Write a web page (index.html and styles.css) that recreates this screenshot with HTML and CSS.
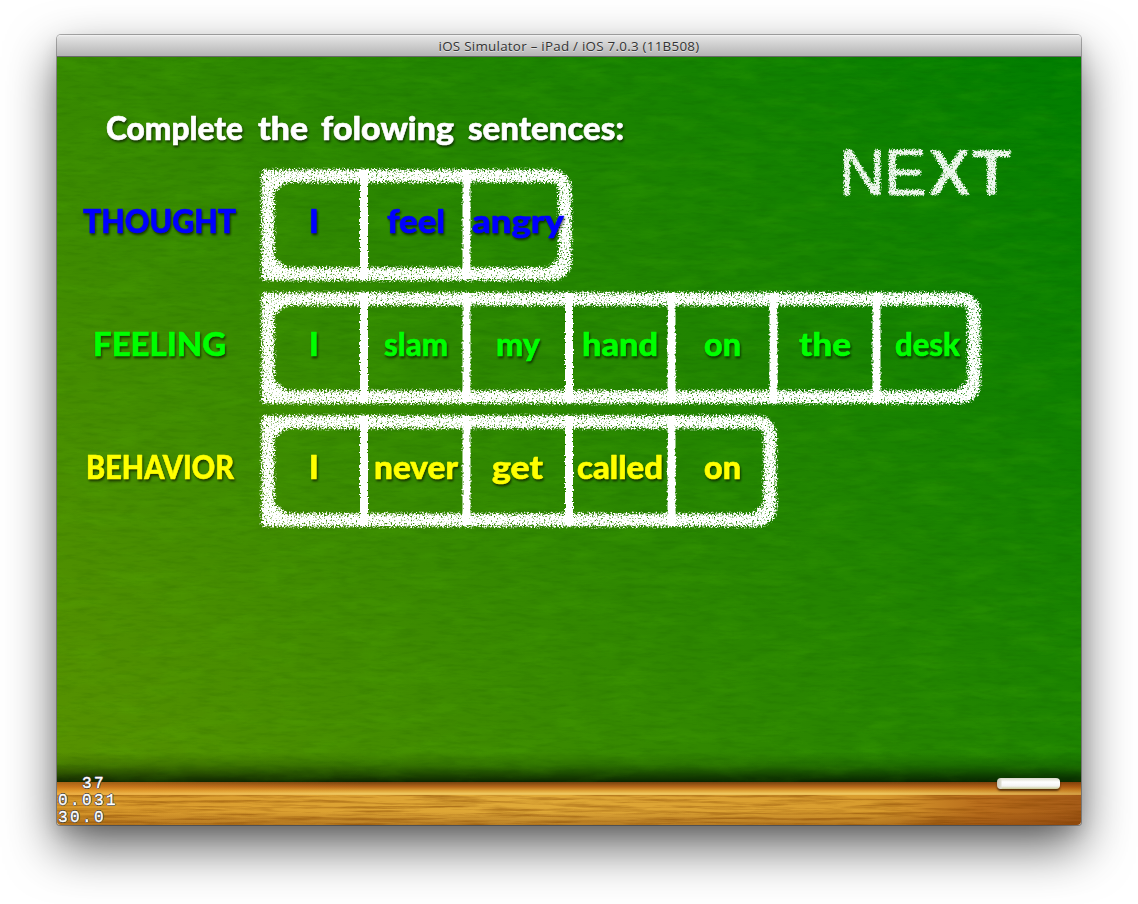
FILE: index.html
```html
<!DOCTYPE html>
<html lang="en">
<head>
<meta charset="utf-8">
<title>iOS Simulator</title>
<link rel="stylesheet" href="styles.css">
</head>
<body>
<svg class="defs" width="0" height="0" aria-hidden="true">
  <defs>
    <filter id="chalk" filterUnits="userSpaceOnUse" x="-10" y="-10" width="760" height="140" color-interpolation-filters="sRGB">
      <feGaussianBlur in="SourceAlpha" stdDeviation="2.2" result="b"/>
      <feTurbulence type="fractalNoise" baseFrequency="0.6" numOctaves="2" seed="4" result="n"/>
      <feComposite in="b" in2="n" operator="arithmetic" k2="0.9" k3="2.1" k4="-1.05" result="m"/>
      <feComponentTransfer in="m" result="t"><feFuncA type="linear" slope="2.2" intercept="-0.62"/></feComponentTransfer>
      <feComponentTransfer in="b" result="near"><feFuncA type="linear" slope="5" intercept="-0.5"/></feComponentTransfer>
      <feFlood flood-color="#fff"/>
      <feComposite in2="t" operator="in"/>
      <feComposite in2="near" operator="in"/>
    </filter>
    <filter id="line" filterUnits="userSpaceOnUse" x="-10" y="-10" width="760" height="140" color-interpolation-filters="sRGB">
      <feTurbulence type="fractalNoise" baseFrequency="0.5" numOctaves="2" seed="9" result="n"/>
      <feDisplacementMap in="SourceGraphic" in2="n" scale="4" xChannelSelector="R" yChannelSelector="G"/>
    </filter>
    <filter id="chalk-thin" filterUnits="userSpaceOnUse" x="-8" y="-5" width="190" height="70" color-interpolation-filters="sRGB">
      <feGaussianBlur in="SourceAlpha" stdDeviation="1.2" result="b"/>
      <feTurbulence type="fractalNoise" baseFrequency="0.65" numOctaves="2" seed="7" result="n"/>
      <feComposite in="b" in2="n" operator="arithmetic" k2="1" k3="2" k4="-1.02" result="m"/>
      <feComponentTransfer in="m" result="t"><feFuncA type="linear" slope="1.8" intercept="-0.5"/></feComponentTransfer>
      <feComponentTransfer in="b" result="near"><feFuncA type="linear" slope="5" intercept="-0.5"/></feComponentTransfer>
      <feFlood flood-color="#fff" flood-opacity=".94"/>
      <feComposite in2="t" operator="in"/>
      <feComposite in2="near" operator="in"/>
    </filter>
    <filter id="smudge" x="0" y="0" width="100%" height="100%" color-interpolation-filters="sRGB">
      <feTurbulence type="fractalNoise" baseFrequency="0.02 0.07" numOctaves="6" seed="12"/>
      <feColorMatrix values="0 0 0 0 .4  0 0 0 0 .85  0 0 0 0 0  1.5 0 0 0 -.66"/>
    </filter>
    <filter id="shade" x="0" y="0" width="100%" height="100%" color-interpolation-filters="sRGB">
      <feTurbulence type="fractalNoise" baseFrequency="0.05 0.25" numOctaves="4" seed="31"/>
      <feColorMatrix values="0 0 0 0 0  0 0 0 0 .2  0 0 0 0 0  1.4 0 0 0 -.62"/>
    </filter>
    <filter id="grain" x="0" y="0" width="100%" height="100%" color-interpolation-filters="sRGB">
      <feTurbulence type="fractalNoise" baseFrequency="0.014 0.35" numOctaves="5" seed="5"/>
      <feColorMatrix values="0 0 0 0 .5  0 0 0 0 .25  0 0 0 0 0  2.4 0 0 0 -1"/>
    </filter>
  </defs>
</svg>

<main class="window">
  <header class="titlebar">iOS Simulator – iPad / iOS 7.0.3 (11B508)</header>
  <section class="board">
    <svg class="texture" width="1024" height="726" aria-hidden="true">
      <rect width="1024" height="726" filter="url(#smudge)" opacity=".17"/>
      <rect width="1024" height="726" filter="url(#shade)" opacity=".16"/>
    </svg>

    <div class="top">
      <svg class="hand title" width="518" height="40">
        <text y="26"><tspan x="0" textLength="137" lengthAdjust="spacingAndGlyphs">Complete</tspan> <tspan x="152" textLength="50" lengthAdjust="spacingAndGlyphs">the</tspan> <tspan x="215" textLength="133" lengthAdjust="spacingAndGlyphs">folowing</tspan> <tspan x="362" textLength="156" lengthAdjust="spacingAndGlyphs">sentences:</tspan></text>
      </svg>
      <svg class="next" width="175" height="56">
        <text x="-4 41 85 129" y="51" filter="url(#chalk-thin)">NE<tspan class="heavy">XT</tspan></text>
      </svg>
    </div>

    <div class="rows">
      <div class="row blue">
        <svg class="frame" width="311" height="112" aria-hidden="true">
          <g filter="url(#chalk)"><path class="edge" d="M7 7H290Q304 7 304 21V91Q304 105 290 105H7Z"/><path class="corner" d="M12 16L17 12M12 96L19 101M299 96L294 101"/></g>
          <path class="rule" filter="url(#line)" d="M103 1V111M205.5 1V111"/>
        </svg>
        <div class="label"><svg class="hand" width="153" height="40"><text y="30" textLength="153" lengthAdjust="spacingAndGlyphs">THOUGHT</text></svg></div>
        <div class="cell"><svg class="hand" width="9" height="40"><text y="30">I</text></svg></div>
        <div class="cell"><svg class="hand" width="58" height="40"><text y="30" textLength="58" lengthAdjust="spacingAndGlyphs">feel</text></svg></div>
        <div class="cell"><svg class="hand" width="92" height="40"><text y="30" textLength="92" lengthAdjust="spacingAndGlyphs">angry</text></svg></div>
      </div>
      <div class="row green">
        <svg class="frame" width="720" height="112" aria-hidden="true">
          <g filter="url(#chalk)"><path class="edge" d="M7 7H699Q713 7 713 21V91Q713 105 699 105H7Z"/><path class="corner" d="M12 16L17 12M12 96L19 101M708 96L703 101"/></g>
          <path class="rule" filter="url(#line)" d="M103 1V111M205.5 1V111M308 1V111M410.5 1V111M512.5 1V111M615.5 1V111"/>
        </svg>
        <div class="label"><svg class="hand" width="133" height="40"><text y="30" textLength="133" lengthAdjust="spacingAndGlyphs">FEELING</text></svg></div>
        <div class="cell"><svg class="hand" width="9" height="40"><text y="30">I</text></svg></div>
        <div class="cell"><svg class="hand" width="64" height="40"><text y="30" textLength="64" lengthAdjust="spacingAndGlyphs">slam</text></svg></div>
        <div class="cell"><svg class="hand" width="44" height="40"><text y="30" textLength="44" lengthAdjust="spacingAndGlyphs">my</text></svg></div>
        <div class="cell"><svg class="hand" width="76" height="40"><text y="30" textLength="76" lengthAdjust="spacingAndGlyphs">hand</text></svg></div>
        <div class="cell"><svg class="hand" width="37" height="40"><text y="30" textLength="37" lengthAdjust="spacingAndGlyphs">on</text></svg></div>
        <div class="cell"><svg class="hand" width="52" height="40"><text y="30" textLength="52" lengthAdjust="spacingAndGlyphs">the</text></svg></div>
        <div class="cell"><svg class="hand" width="65" height="40"><text y="30" textLength="65" lengthAdjust="spacingAndGlyphs">desk</text></svg></div>
      </div>
      <div class="row yellow">
        <svg class="frame" width="516" height="112" aria-hidden="true">
          <g filter="url(#chalk)"><path class="edge" d="M7 7H495Q509 7 509 21V91Q509 105 495 105H7Z"/><path class="corner" d="M12 16L17 12M12 96L19 101M504 96L499 101"/></g>
          <path class="rule" filter="url(#line)" d="M103 1V111M205.5 1V111M308 1V111M410.5 1V111"/>
        </svg>
        <div class="label"><svg class="hand" width="148" height="40"><text y="30" textLength="148" lengthAdjust="spacingAndGlyphs">BEHAVIOR</text></svg></div>
        <div class="cell"><svg class="hand" width="9" height="40"><text y="30">I</text></svg></div>
        <div class="cell"><svg class="hand" width="84" height="40"><text y="30" textLength="84" lengthAdjust="spacingAndGlyphs">never</text></svg></div>
        <div class="cell"><svg class="hand" width="51" height="40"><text y="30" textLength="51" lengthAdjust="spacingAndGlyphs">get</text></svg></div>
        <div class="cell"><svg class="hand" width="86" height="40"><text y="30" textLength="86" lengthAdjust="spacingAndGlyphs">called</text></svg></div>
        <div class="cell"><svg class="hand" width="37" height="40"><text y="30" textLength="37" lengthAdjust="spacingAndGlyphs">on</text></svg></div>
      </div>
    </div>
  </section>
  <footer class="ledge">
    <div class="lip"></div>
    <div class="wood"><svg width="1024" height="30" aria-hidden="true"><rect width="1024" height="30" filter="url(#grain)" opacity=".5"/></svg></div>
    <pre class="stats">  37
0.031
30.0</pre>
    <div class="stick"></div>
  </footer>
</main>
</body>
</html>
```

FILE: styles.css
```css
body { margin: 0; height: 904px; background: #fff; overflow: hidden; }
svg { display: block; }
.defs { position: absolute; }

.window {
  width: 1024px;
  height: 790px;
  margin: 35px 0 0 57px;
  border-radius: 4px 4px 3px 3px;
  box-shadow: 0 0 0 1px rgba(0,0,0,.3), 0 22px 50px rgba(0,0,0,.62), 0 8px 16px rgba(0,0,0,.12);
  display: flex;
  flex-direction: column;
}
.titlebar {
  box-sizing: border-box;
  height: 22px;
  border-radius: 4px 4px 0 0;
  border-bottom: 1px solid #686868;
  background: linear-gradient(#f4f4f4, #e2e2e2 2px, #b4b4b4);
  color: #333;
  font: 13.4px/22px "Open Sans", "Noto Sans", sans-serif;
  letter-spacing: .25px;
  text-align: center;
  text-shadow: 0 1px 0 rgba(255,255,255,.5);
}

.board {
  position: relative;
  height: 725px;
  background:
    linear-gradient(transparent 695px, rgba(0,20,0,.22) 708px, rgba(0,12,0,.8) 725px),
    linear-gradient(231deg, #007e00, #2a8600 50%, #589200);
  overflow: hidden;
}
.texture { position: absolute; left: 0; top: 0; }
.top {
  position: relative;
  display: flex;
  justify-content: space-between;
  align-items: flex-start;
  height: 112px;
  padding: 0 63px 0 49px;
}
.title { margin-top: 57px; }
.next { margin-top: 87px; overflow: visible; }
.next text { font: 400 64px "Liberation Sans", Arial, sans-serif; fill: #fff; stroke: #fff; stroke-width: 1px; }
.next .heavy { font-weight: 700; stroke-width: 0; }

.hand { overflow: visible; position: relative; filter: drop-shadow(1px 2px 1px rgba(0,0,0,.6)); }
.hand text {
  font: 900 32px Lato, "Open Sans", sans-serif;
  fill: currentColor;
  stroke: currentColor;
  stroke-width: .6px;
  stroke-linejoin: round;
}
.title { color: #fff; }
.rows { display: grid; gap: 11px; }
.row {
  position: relative;
  display: flex;
  align-items: center;
  height: 112px;
}
.frame { position: absolute; left: 204px; top: 0; overflow: visible; }
.edge { fill: none; stroke: #fff; stroke-width: 13px; }
.corner { fill: none; stroke: #fff; stroke-width: 13px; stroke-linecap: round; }
.rule { fill: none; stroke: #fff; stroke-width: 8px; }
.label, .cell { display: flex; justify-content: center; padding-bottom: 5px; }
.label { width: 205px; }
.cell { width: 102.4px; }
.blue { color: #00f; }
.green { color: #0f0; }
.yellow { color: #ff0; }

.ledge {
  position: relative;
  height: 43px;
  border-radius: 0 0 4px 4px;
}
.lip {
  height: 13px;
  background:
    linear-gradient(90deg, rgba(230,140,30,.45), transparent 30%, transparent 80%, rgba(150,60,0,.3)),
    linear-gradient(#75400f, #b96a1a 5px, #e0a638 9px, #f0cc66 12px, #e8b84c);
}
.wood {
  height: 30px;
  border-radius: 0 0 4px 4px;
  overflow: hidden;
  background:
    linear-gradient(transparent 55%, rgba(110,45,0,.35)),
    linear-gradient(90deg, #d8982a, #e0aa38 45%, #d89c2e 80%, #b96e1c 90%, #a65c18);
}
.stats {
  position: absolute;
  left: 1px;
  top: -6px;
  margin: 0;
  color: #fff;
  font: 16px/17px "Liberation Mono", monospace;
  letter-spacing: 2.4px;
  -webkit-text-stroke: .4px #fff;
  text-shadow: 1px 0 #333, -1px 0 #333, 0 1px #333, 0 -1px #333;
}
.stick {
  position: absolute;
  left: 940px;
  top: -4px;
  width: 63px;
  height: 11px;
  border-radius: 4px;
  background: linear-gradient(90deg, #c8c8b8, #deded2 4px, transparent 5px), linear-gradient(#d8d8c8, #fff 4px, #f4f4f4 8px, #c8c890);
  box-shadow: 0 2px 2px rgba(50,20,0,.7);
}
```
